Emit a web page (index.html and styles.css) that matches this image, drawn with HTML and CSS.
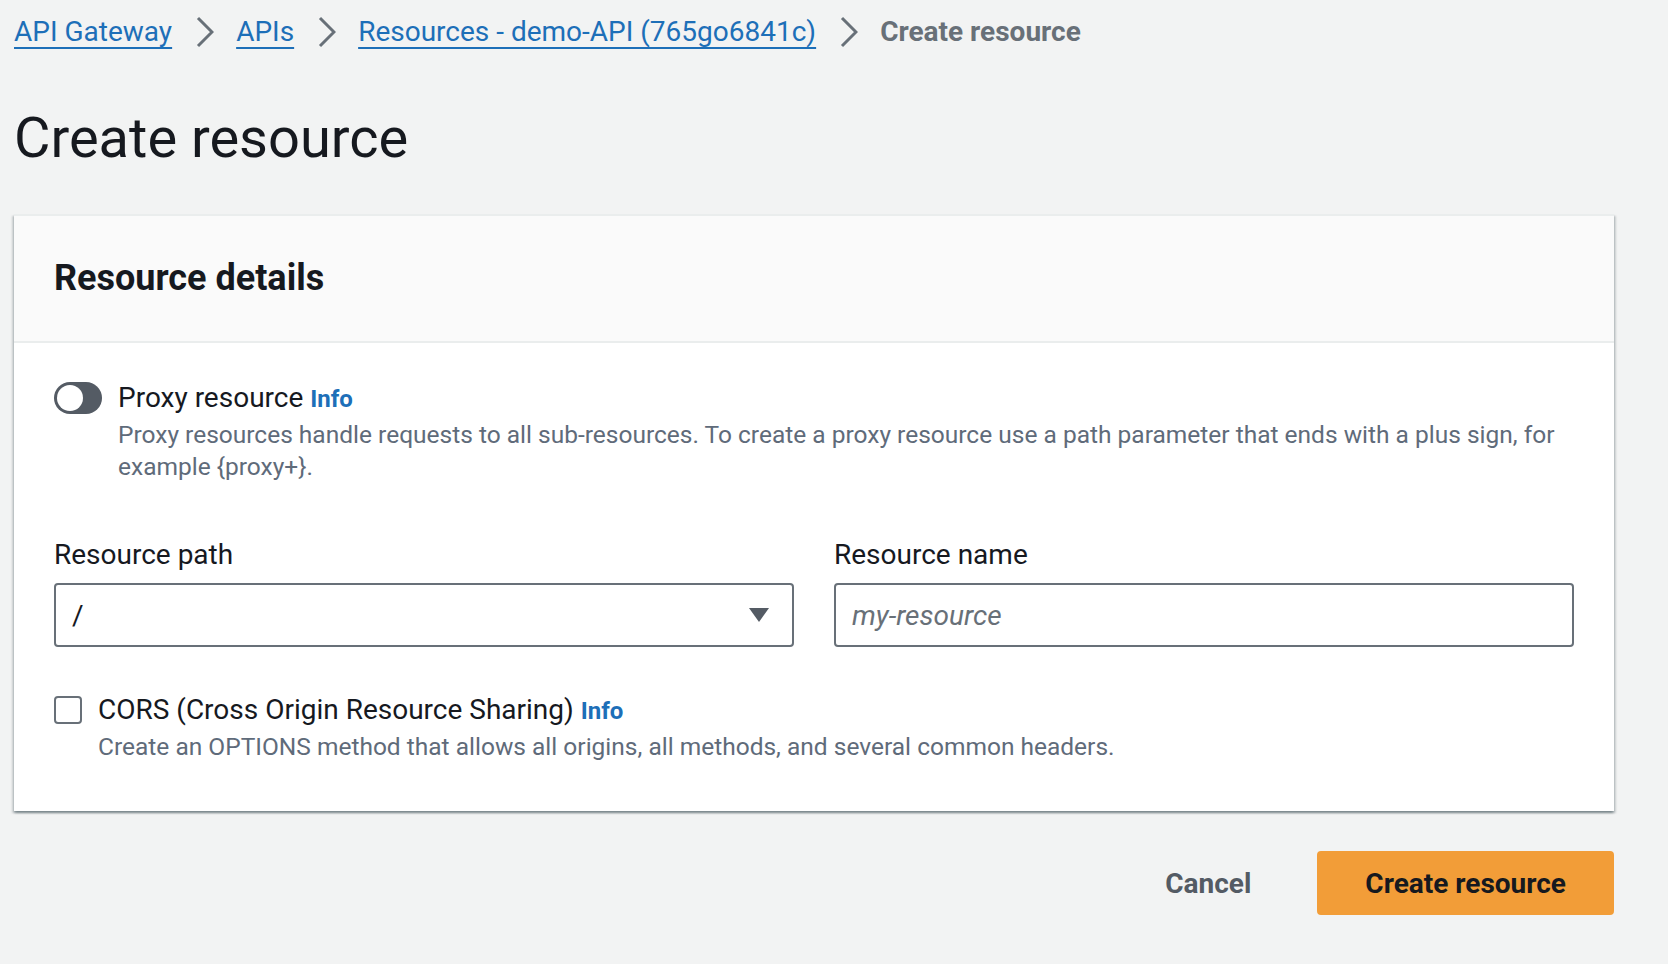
FILE: index.html
```html
<!DOCTYPE html>
<html lang="en">
<head>
<meta charset="utf-8">
<title>Create resource</title>
<link rel="stylesheet" href="styles.css">
</head>
<body>
<div class="page">
  <nav class="breadcrumbs">
    <a class="crumb" href="#">API Gateway</a>
    <svg class="chev" viewBox="0 0 18 32" width="18" height="32"><path d="M2 2 L16 16 L2 30"/></svg>
    <a class="crumb" href="#">APIs</a>
    <svg class="chev" viewBox="0 0 18 32" width="18" height="32"><path d="M2 2 L16 16 L2 30"/></svg>
    <a class="crumb" href="#">Resources - demo-API (765go6841c)</a>
    <svg class="chev" viewBox="0 0 18 32" width="18" height="32"><path d="M2 2 L16 16 L2 30"/></svg>
    <span class="crumb-current">Create resource</span>
  </nav>

  <h1 class="title">Create resource</h1>

  <section class="card">
    <header class="card-header">
      <h2 class="card-title">Resource details</h2>
    </header>
    <div class="card-body">
      <div class="toggle-field">
        <span class="toggle"><span class="knob"></span></span>
        <div class="field-text">
          <div class="field-label">Proxy resource <a class="info" href="#">Info</a></div>
          <div class="desc">Proxy resources handle requests to all sub-resources. To create a proxy resource use a path parameter that ends with a plus sign, for example {proxy+}.</div>
        </div>
      </div>

      <div class="columns">
        <div class="field">
          <div class="label">Resource path</div>
          <div class="select">
            <span class="value">/</span>
            <svg class="caret" viewBox="0 0 20 14" width="20" height="14"><path d="M0 0 H20 L10 14 Z"/></svg>
          </div>
        </div>
        <div class="field">
          <div class="label">Resource name</div>
          <div class="input"><span class="placeholder">my-resource</span></div>
        </div>
      </div>

      <div class="check-field">
        <span class="checkbox"></span>
        <div class="field-text">
          <div class="field-label">CORS (Cross Origin Resource Sharing) <a class="info" href="#">Info</a></div>
          <div class="desc">Create an OPTIONS method that allows all origins, all methods, and several common headers.</div>
        </div>
      </div>
    </div>
  </section>

  <div class="actions">
    <button class="btn-link" type="button">Cancel</button>
    <button class="btn-primary" type="button">Create resource</button>
  </div>
</div>
</body>
</html>
```

FILE: styles.css
```css
* {
  box-sizing: border-box;
}

html,
body {
  margin: 0;
  padding: 0;
}

body {
  background: #f2f3f3;
  color: #16191f;
  font-family: Roboto, "Liberation Sans", Arial, sans-serif;
  width: 1668px;
  height: 964px;
  overflow: hidden;
}

.page {
  padding: 12px 54px 0 14px;
}

/* Breadcrumbs */
.breadcrumbs {
  display: flex;
  align-items: center;
  height: 40px;
  font-size: 28px;
  line-height: 40px;
}

.crumb {
  color: #1d6fb8;
  text-decoration: underline;
  text-decoration-thickness: 2px;
  text-underline-offset: 6px;
}

.chev {
  margin: 0 22px 0 24px;
  fill: none;
  stroke: #687078;
  stroke-width: 3;
  flex: none;
}

.crumb-current {
  color: #687078;
  font-weight: 700;
}

/* Page title */
.title {
  margin: 54px 0 44px 0;
  font-size: 56px;
  line-height: 64px;
  font-weight: 400;
  color: #16191f;
}

/* Card */
.card {
  background: #ffffff;
  border-top: 2px solid #eaeded;
  box-shadow: 0 2px 2px 0 rgba(0, 28, 36, 0.3),
    2px 2px 2px 0 rgba(0, 28, 36, 0.15),
    -2px 2px 2px 0 rgba(0, 28, 36, 0.15);
}

.card-header {
  background: #fafafa;
  padding: 40px 40px 41px;
  border-bottom: 2px solid #eaeded;
}

.card-title {
  margin: 0;
  font-size: 36px;
  line-height: 44px;
  font-weight: 700;
}

.card-body {
  padding: 35px 40px 48px;
}

.field-label,
.label {
  font-size: 28px;
  line-height: 40px;
  color: #16191f;
}

.info {
  color: #1d6fb8;
  font-weight: 700;
  font-size: 24px;
  text-decoration: none;
}

.desc {
  font-size: 24.5px;
  line-height: 32px;
  color: #5f6b7a;
}

/* Toggle */
.toggle-field {
  display: flex;
  gap: 16px;
}

.toggle {
  position: relative;
  flex: none;
  width: 48px;
  height: 32px;
  margin-top: 4px;
  border-radius: 16px;
  background: #545b64;
}

.knob {
  position: absolute;
  left: 3px;
  top: 3px;
  width: 26px;
  height: 26px;
  border-radius: 50%;
  background: #ffffff;
}

/* Columns */
.columns {
  display: grid;
  grid-template-columns: 1fr 1fr;
  column-gap: 40px;
  margin-top: 52px;
}

.label {
  margin-bottom: 8px;
}

.select,
.input {
  height: 64px;
  border: 2px solid #687078;
  border-radius: 4px;
  background: #ffffff;
  display: flex;
  align-items: center;
  font-size: 28px;
}

.select {
  justify-content: space-between;
  padding: 0 23px 0 16px;
}

.caret {
  fill: #545b64;
}

.input {
  padding: 0 16px;
}

.placeholder {
  color: #687078;
  font-style: italic;
}

/* Checkbox */
.check-field {
  display: flex;
  gap: 16px;
  margin-top: 43px;
}

.checkbox {
  flex: none;
  width: 28px;
  height: 28px;
  margin-top: 6px;
  border: 2px solid #687078;
  border-radius: 4px;
  background: #ffffff;
}

/* Actions */
.actions {
  display: flex;
  justify-content: flex-end;
  align-items: center;
  gap: 26px;
  margin-top: 40px;
}

.btn-link,
.btn-primary {
  font-family: inherit;
  font-size: 28px;
  font-weight: 700;
  height: 64px;
  border-radius: 4px;
  cursor: pointer;
}

.btn-link {
  background: transparent;
  border: none;
  color: #545b64;
  padding: 0 40px;
}

.btn-primary {
  background: #f29d38;
  border: 2px solid #f29d38;
  color: #16191f;
  padding: 0 46px;
}
```
